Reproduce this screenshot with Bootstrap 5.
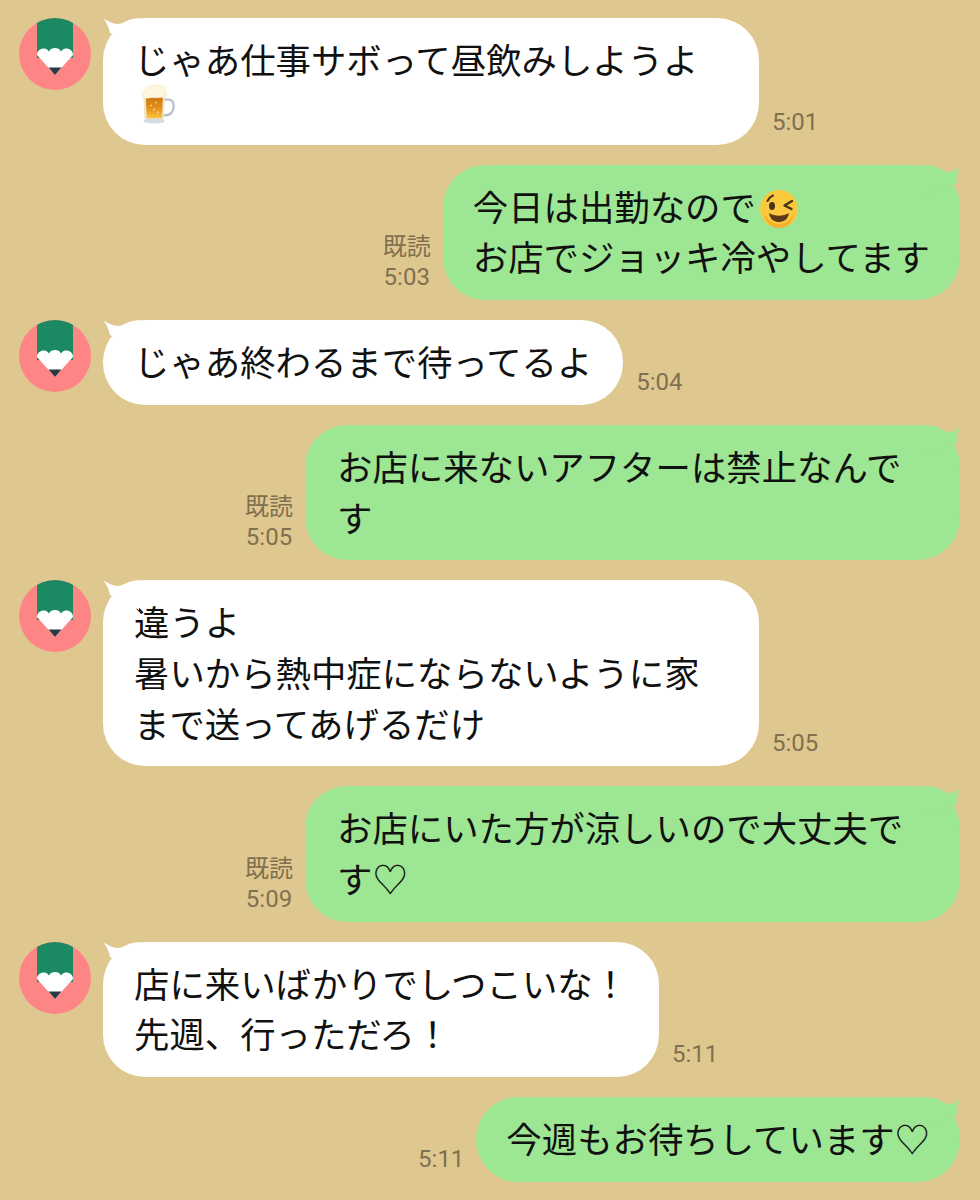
<!DOCTYPE html>
<html lang="ja">
<head>
<meta charset="utf-8">
<title>Chat</title>
<link href="https://cdn.jsdelivr.net/npm/bootstrap@5.3.0/dist/css/bootstrap.min.css" rel="stylesheet">
<style>
body{background:#dfc88f;font-family:"Noto Sans CJK JP","Noto Sans",sans-serif;color:#111;}
.thread{padding:18px 20px 0 19px;gap:20px;}
.ava{width:72px;height:72px;flex:none;display:block;}
.bub{position:relative;font-size:35.4px;line-height:50.7px;padding:16px 30px 18px;border-radius:42px;white-space:nowrap;}
.bub-in{background:#fff;margin-left:12px;padding-left:31px;padding-right:31px;}
.bub-out{background:#9de693;}
.bub-out.wide{padding-left:32px;width:655px;}
.wide{width:656px;}
.tail{position:absolute;top:0;width:36px;height:30px;display:block;}
.bub-in .tail{left:0;fill:#fff;}
.bub-out .tail{right:0;fill:#9de693;}
.stamp{font-family:Roboto,"Noto Sans CJK JP",sans-serif;font-size:24px;line-height:31px;color:#7f7050;text-align:center;}
.stamp-jp{font-family:"Noto Sans CJK JP",sans-serif;margin-bottom:2px;}
.stamp-l{margin-left:13px;margin-bottom:7px;}
.stamp-r{margin-right:12px;margin-bottom:7px;}
.beer-line{height:44px;}
.beer{width:36px;height:41px;display:block;margin-left:6px;margin-top:-2px;}
.wink{width:42px;height:42px;vertical-align:-9px;margin-left:2px;}
</style>
</head>
<body>
<svg width="0" height="0" class="position-absolute">
  <defs>
    <clipPath id="disc"><circle cx="36" cy="36" r="36"/></clipPath>
    <linearGradient id="ale" x1="0" y1="0" x2="0" y2="1"><stop offset="0" stop-color="#cf7a14"/><stop offset=".55" stop-color="#e8931c"/><stop offset="1" stop-color="#f7c53c"/></linearGradient>
    <symbol id="pen" viewBox="0 0 72 72">
      <circle cx="36" cy="36" r="36" fill="#fd8585"/>
      <rect x="18" y="0" width="36" height="40" fill="#1b8a63" clip-path="url(#disc)"/>
      <path d="M18 37C18 33 21 30.5 25 30.5C27.500 30.500 29 32 30 33.500C31 31 33.500 30 36 30C38.500 30 41 31 42 33.500C43 32 44.500 30.500 47 30.500C51 30.500 54 33 54 37L36 57Z" fill="#fff"/>
      <path d="M29.500 49.500H42.500L36 57Z" fill="#2b3a42"/>
    </symbol>
    <symbol id="tl" viewBox="0 0 36 30"><path d="M.5 .5C5 3 10 6 15 6C20 6 25 .5 36 0V30L7 15C6 10 4 5 .5 .5Z"/></symbol>
    <symbol id="tr" viewBox="0 0 36 30"><path d="M0 0C6 0 12 1 16 3C19 5 21 7 24 7C28 7 32 5 35.500 3C33 8 32 13 33 18L0 30Z"/></symbol>
  </defs>
</svg>
<main class="thread d-flex flex-column">

  <div class="d-flex align-items-end">
    <svg class="ava align-self-start"><use href="#pen"/></svg>
    <div class="bub bub-in wide">
      <svg class="tail"><use href="#tl"/></svg>
      じゃあ仕事サボって昼飲みしようよ
      <div class="beer-line">
        <svg class="beer" viewBox="0 0 36 42">
          <path d="M24 17H29C33 17 34 20 34 24C34 29 31 33 26 33H23" fill="none" stroke="#b9c2cc" stroke-width="2.500"/>
          <path d="M3 14H25L24 36C24 38 22 39 14 39C6 39 4 38 4 36Z" fill="#efe6cf"/>
          <path d="M5.500 15H23L22 36H6.500Z" fill="url(#ale)"/>
          <g fill="#fff3c4"><circle cx="11" cy="23" r=".8"/><circle cx="16" cy="20" r=".8"/><circle cx="14" cy="27" r=".8"/><circle cx="18" cy="30" r=".8"/></g>
          <ellipse cx="14" cy="39" rx="11" ry="2.500" fill="#d5d9e6"/>
          <path d="M3 15C0 11 3 7 7 7C8 3 12 1 16 2.500C20 1 25 4 25 7C28 9 27 14 24 15C20 13 18 16 14 15C10 14 7 17 3 15Z" fill="#fff5dc" stroke="#efe0b8" stroke-width=".6"/>
        </svg>
      </div>
    </div>
    <div class="stamp stamp-l">5:01</div>
  </div>

  <div class="d-flex align-items-end justify-content-end">
    <div class="stamp stamp-r"><div class="stamp-jp">既読</div>5:03</div>
    <div class="bub bub-out">
      <svg class="tail"><use href="#tr"/></svg>
      今日は出勤なので<svg class="wink" viewBox="0 0 42 42">
        <circle cx="21" cy="21" r="19" fill="#fbc93d"/>
        <path d="M6 21a15 15 0 0 0 30 0c0 12-6 19-15 19S6 33 6 21Z" fill="#f19a1f" opacity=".55"/>
        <path d="M9.500 13C11 10 12.500 8.500 15 7.500" fill="none" stroke="#4a3316" stroke-width="2" stroke-linecap="round"/>
        <ellipse cx="14" cy="18" rx="3" ry="4" fill="#4a3316"/>
        <path d="M34 13L26.500 17.500L33.500 21" fill="none" stroke="#4a3316" stroke-width="2.400" stroke-linecap="round" stroke-linejoin="round"/>
        <path d="M11 25C17 28.500 25 28.500 31 25C30 32 25 34 21 34C17 34 12 32 11 25Z" fill="#5b3a17"/>
      </svg><br>お店でジョッキ冷やしてます
    </div>
  </div>

  <div class="d-flex align-items-end">
    <svg class="ava align-self-start"><use href="#pen"/></svg>
    <div class="bub bub-in">
      <svg class="tail"><use href="#tl"/></svg>
      じゃあ終わるまで待ってるよ
    </div>
    <div class="stamp stamp-l">5:04</div>
  </div>

  <div class="d-flex align-items-end justify-content-end">
    <div class="stamp stamp-r"><div class="stamp-jp">既読</div>5:05</div>
    <div class="bub bub-out wide">
      <svg class="tail"><use href="#tr"/></svg>
      お店に来ないアフターは禁止なんで<br>す
    </div>
  </div>

  <div class="d-flex align-items-end">
    <svg class="ava align-self-start"><use href="#pen"/></svg>
    <div class="bub bub-in wide">
      <svg class="tail"><use href="#tl"/></svg>
      違うよ<br>暑いから熱中症にならないように家<br>まで送ってあげるだけ
    </div>
    <div class="stamp stamp-l">5:05</div>
  </div>

  <div class="d-flex align-items-end justify-content-end">
    <div class="stamp stamp-r"><div class="stamp-jp">既読</div>5:09</div>
    <div class="bub bub-out wide">
      <svg class="tail"><use href="#tr"/></svg>
      お店にいた方が涼しいので大丈夫で<br>す♡
    </div>
  </div>

  <div class="d-flex align-items-end">
    <svg class="ava align-self-start"><use href="#pen"/></svg>
    <div class="bub bub-in">
      <svg class="tail"><use href="#tl"/></svg>
      店に来いばかりでしつこいな！<br>先週、行っただろ！
    </div>
    <div class="stamp stamp-l">5:11</div>
  </div>

  <div class="d-flex align-items-end justify-content-end">
    <div class="stamp stamp-r">5:11</div>
    <div class="bub bub-out">
      <svg class="tail"><use href="#tr"/></svg>
      今週もお待ちしています♡
    </div>
  </div>

</main>
<script src="https://cdn.jsdelivr.net/npm/bootstrap@5.3.0/dist/js/bootstrap.bundle.min.js"></script>
</body>
</html>
